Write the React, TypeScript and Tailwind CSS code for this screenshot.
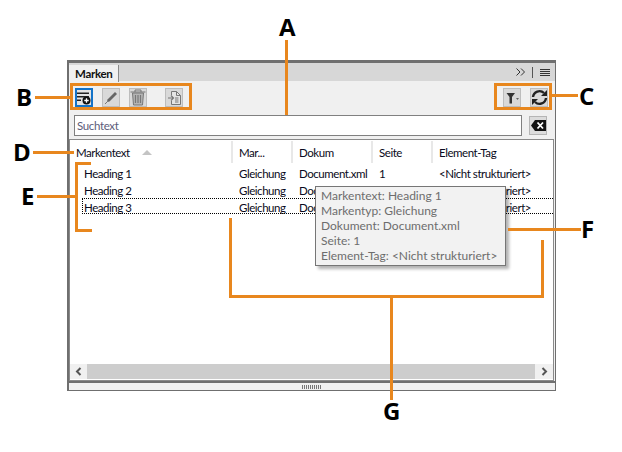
const uiFont = "font-['Lato','Noto_Sans',sans-serif]";

const rows = ['Heading 1', 'Heading 2', 'Heading 3'];

function ToolButton({ children, active }: { children: React.ReactNode; active?: boolean }) {
  return (
    <div
      className={`w-[18px] h-[19px] flex items-center justify-center ${
        active ? 'border-2 border-[#1473c8] bg-[#e4e4e4]' : 'border border-[#bdbdbd] bg-[#d9d9d9]'
      }`}
    >
      {children}
    </div>
  );
}

function Line({ className }: { className: string }) {
  return <div className={`absolute bg-[#e8871e] ${className}`} />;
}

function Letter({ className, children }: { className: string; children: string }) {
  return (
    <div className={`absolute font-['Open_Sans',sans-serif] font-bold text-[24px] leading-[24px] text-black ${className}`}>
      {children}
    </div>
  );
}

function Annotations() {
  return (
    <>
      {/* Box B */}
      <div className="absolute left-[70px] top-[83px] w-[122px] h-[27px] border-[3px] border-[#e8871e]" />
      {/* Box C */}
      <div className="absolute left-[494px] top-[83px] w-[58px] h-[27px] border-[3px] border-[#e8871e]" />
      <Line className="left-[285px] top-[40px] w-[3px] h-[75px]" />
      <Line className="left-[35px] top-[96px] w-[35px] h-[3px]" />
      <Line className="left-[552px] top-[94px] w-[26px] h-[3px]" />
      <Line className="left-[33px] top-[151px] w-[41px] h-[3px]" />
      {/* E bracket */}
      <Line className="left-[75px] top-[162px] w-[3px] h-[70px]" />
      <Line className="left-[75px] top-[162px] w-[16px] h-[3px]" />
      <Line className="left-[75px] top-[229px] w-[17px] h-[3px]" />
      <Line className="left-[37px] top-[195px] w-[38px] h-[3px]" />
      {/* F line */}
      <Line className="left-[508px] top-[228px] w-[73px] h-[3px]" />
      {/* G bracket */}
      <Line className="left-[229px] top-[218px] w-[3px] h-[80px]" />
      <Line className="left-[229px] top-[295px] w-[315px] h-[3px]" />
      <Line className="left-[541px] top-[240px] w-[3px] h-[58px]" />
      <Line className="left-[390px] top-[298px] w-[3px] h-[102px]" />
      <Letter className="left-[279px] top-[15px]">A</Letter>
      <Letter className="left-[16px] top-[85px]">B</Letter>
      <Letter className="left-[579px] top-[84px]">C</Letter>
      <Letter className="left-[13px] top-[140px]">D</Letter>
      <Letter className="left-[21px] top-[184px]">E</Letter>
      <Letter className="left-[581px] top-[217px]">F</Letter>
      <Letter className="left-[383px] top-[399px]">G</Letter>
    </>
  );
}

function TableRow({ name, selected }: { name: string; selected?: boolean }) {
  return (
    <div className="relative flex h-[17px] items-center">
      {selected && (
        <div className="absolute left-[12px] right-0 top-[-1px] h-[16px] border border-dotted border-r-0 border-black" />
      )}
      <div className="w-[169px] pl-[14px]">{name}</div>
      <div className="w-[60px]">Gleichung</div>
      <div className="w-[80px]">Document.xml</div>
      <div className="w-[60px]">1</div>
      <div>&lt;Nicht strukturiert&gt;</div>
    </div>
  );
}

function HeaderCell({ label, className }: { label: string; className: string }) {
  return (
    <div className={`h-[22px] flex items-center pl-[6px] border-r-2 border-[#e8e8e8] ${className}`}>{label}</div>
  );
}

export default function App() {
  return (
    <div className={`relative w-[622px] h-[452px] bg-white pt-[60px] pl-[67px] overflow-hidden ${uiFont}`}>
      <div className="w-[489px] h-[331px] flex flex-col bg-[#f0f0f0] border-2 border-t-[3px] border-[#6f6f6f] border-b border-r">
        {/* Title strip */}
        <div className="h-[18px] shrink-0 flex items-end justify-between bg-[#d7d7d7]">
          <div className="h-[17px] w-[50px] -mb-px bg-[#f0f0f0] border-r border-[#8a8a8a] flex items-center pl-[6px] text-[11.5px] tracking-[-0.3px] font-bold text-[#111]">
            Marken
          </div>
          <div className="h-full flex items-center gap-[7px] pr-[5px]">
            <svg width="9" height="8" viewBox="0 0 9 8" fill="none" stroke="#333" strokeWidth="1">
              <path d="M0.5 0.5L4 4L0.5 7.5M5 0.5L8.5 4L5 7.5" />
            </svg>
            <div className="w-px h-[11px] bg-[#555]" />
            <div className="flex flex-col gap-[1px] w-[10px]">
              <div className="h-px bg-[#333]" />
              <div className="h-px bg-[#333]" />
              <div className="h-px bg-[#333]" />
              <div className="h-px bg-[#333]" />
            </div>
          </div>
        </div>

        {/* Toolbar */}
        <div className="h-[34px] shrink-0 flex items-center justify-between pl-[6px] pr-[7px] pb-[1px]">
          <div className="flex items-center">
            <ToolButton active>
              <svg width="14" height="14" viewBox="0 0 14 14" className="shrink-0">
                <path d="M0 1.5H12V3H0ZM0 5H12V6.5H0ZM0 8.5H4V10H0Z" fill="#222" />
                <circle cx="9.5" cy="9.5" r="4" fill="#111" />
                <path d="M7.3 9.5H11.7M9.5 7.3V11.7" stroke="#fff" strokeWidth="1.3" />
              </svg>
            </ToolButton>
            <div className="ml-[9px]">
              <ToolButton>
                <svg width="14" height="14" viewBox="0 0 14 14">
                  <path d="M11 1L13 3L5.5 10.5L3 11L3.5 8.5Z" fill="#666" />
                  <path d="M3.5 10.5L1 13" stroke="#777" />
                </svg>
              </ToolButton>
            </div>
            <div className="ml-[9px]">
              <ToolButton>
                <svg width="16" height="17" viewBox="0 0 16 17" fill="none" stroke="#777">
                  <path d="M0.5 3H15.5M5 3V1H11V3" />
                  <path d="M2.5 4H13.5L12.5 16H3.5Z" fill="#b5b5b5" />
                  <path d="M5.5 6V14M8 6V14M10.5 6V14" strokeWidth="1.2" />
                </svg>
              </ToolButton>
            </div>
            <div className="ml-[18px]">
              <ToolButton>
                <svg width="15" height="16" viewBox="0 0 15 16" fill="none" stroke="#777">
                  <path d="M4.5 5V1.5H9.5L13.5 5.5V14.5H4.5V11" fill="#e4e4e4" />
                  <path d="M9.5 1.5V5.5H13.5" />
                  <path d="M1 8H6M4 5.5L6.5 8L4 10.5M8 8H11.5M8 10H11.5M8 12H11.5" strokeWidth="1.2" />
                </svg>
              </ToolButton>
            </div>
          </div>
          <div className="flex items-center gap-[9px]">
            <ToolButton>
              <svg width="13" height="12" viewBox="0 0 13 12">
                <path d="M0.5 1H9L6 5V11.5H3.5V5Z" fill="#333" />
                <path d="M10 6H13L11.5 8Z" fill="#666" />
              </svg>
            </ToolButton>
            <ToolButton>
              <svg width="17" height="17" viewBox="0 0 17 17" fill="none" className="shrink-0">
                <path d="M2 8A6.5 6.5 0 0 1 13 4" stroke="#222" strokeWidth="2.4" />
                <path d="M16 1V7H10Z" fill="#222" />
                <path d="M15 9A6.5 6.5 0 0 1 4 13" stroke="#222" strokeWidth="2.4" />
                <path d="M1 16V10H7Z" fill="#222" />
              </svg>
            </ToolButton>
          </div>
        </div>

        {/* Search */}
        <div className="h-[21px] shrink-0 flex items-center pl-[5px]">
          <div className="w-[448px] h-[21px] bg-white border border-[#808080] flex items-center pl-[2px] text-[11.5px] tracking-[-0.35px] text-[#5c5c7a]">
            Suchtext
          </div>
          <div className="ml-[7px] w-[18px] h-[19px] border border-[#b5b5b5] bg-[#dcdcdc] flex items-center justify-center">
            <svg width="15" height="11" viewBox="0 0 15 11">
              <path d="M4 0H15V11H4L0 5.5Z" fill="#111" />
              <path d="M6.5 2.5L12 8.5M12 2.5L6.5 8.5" stroke="#fff" strokeWidth="1.8" />
            </svg>
          </div>
        </div>

        {/* List */}
        <div className="mt-[3px] mx-0 flex-1 min-h-0 flex flex-col bg-white border border-[#8a8a8a] mr-[1px] text-[11.5px] tracking-[-0.45px] leading-[15px] text-[#0a0a20]">
          <div className="flex shrink-0 mt-[1px]">
            <div className="w-[163px] h-[22px] flex items-center pl-[6px] border-r-2 border-[#e8e8e8]">
              Markentext
              <svg className="ml-[12px]" width="10" height="5" viewBox="0 0 10 5">
                <path d="M0 5L5 0L10 5Z" fill="#c4c4c4" />
              </svg>
            </div>
            <HeaderCell label="Mar..." className="w-[60px]" />
            <HeaderCell label="Dokum" className="w-[80px]" />
            <HeaderCell label="Seite" className="w-[60px]" />
            <div className="pl-[6px] h-[22px] flex items-center">Element-Tag</div>
          </div>
          <div className="flex-1 pt-[2px]">
            {rows.map((r, i) => (
              <TableRow key={r} name={r} selected={i === 2} />
            ))}
          </div>
          {/* Horizontal scrollbar */}
          <div className="h-[15px] mb-[1px] shrink-0 flex bg-[#f0f0f0]">
            <div className="w-[17px] flex items-center justify-center">
              <svg width="7" height="9" viewBox="0 0 7 9" fill="none" stroke="#555" strokeWidth="2">
                <path d="M5.5 1L2 4.5L5.5 8" />
              </svg>
            </div>
            <div className="flex-1 bg-[#cdcdcd]" />
            <div className="w-[18px] flex items-center justify-center">
              <svg width="7" height="9" viewBox="0 0 7 9" fill="none" stroke="#555" strokeWidth="2">
                <path d="M1.5 1L5 4.5L1.5 8" />
              </svg>
            </div>
          </div>
        </div>

        {/* Resize grip */}
        <div className="h-[9px] shrink-0 flex items-center justify-center border-t-2 border-[#6f6f6f]">
          <div className="w-[20px] h-[4px] bg-[repeating-linear-gradient(90deg,#777_0,#777_1px,transparent_1px,transparent_2px)]" />
        </div>
      </div>

      {/* Tooltip */}
      <div className="absolute left-[315px] top-[186px] w-[191px] h-[80px] bg-[#f2f2f2] border border-[#767676] shadow-[3px_3px_3px_rgba(0,0,0,0.3)] pl-[5px] pt-[1px] text-[12px] leading-[15px] text-[#6d6d6d] whitespace-nowrap">
        <div>Markentext: Heading 1</div>
        <div>Markentyp: Gleichung</div>
        <div>Dokument: Document.xml</div>
        <div>Seite: 1</div>
        <div>Element-Tag: &lt;Nicht strukturiert&gt;</div>
      </div>

      <Annotations />
    </div>
  );
}
